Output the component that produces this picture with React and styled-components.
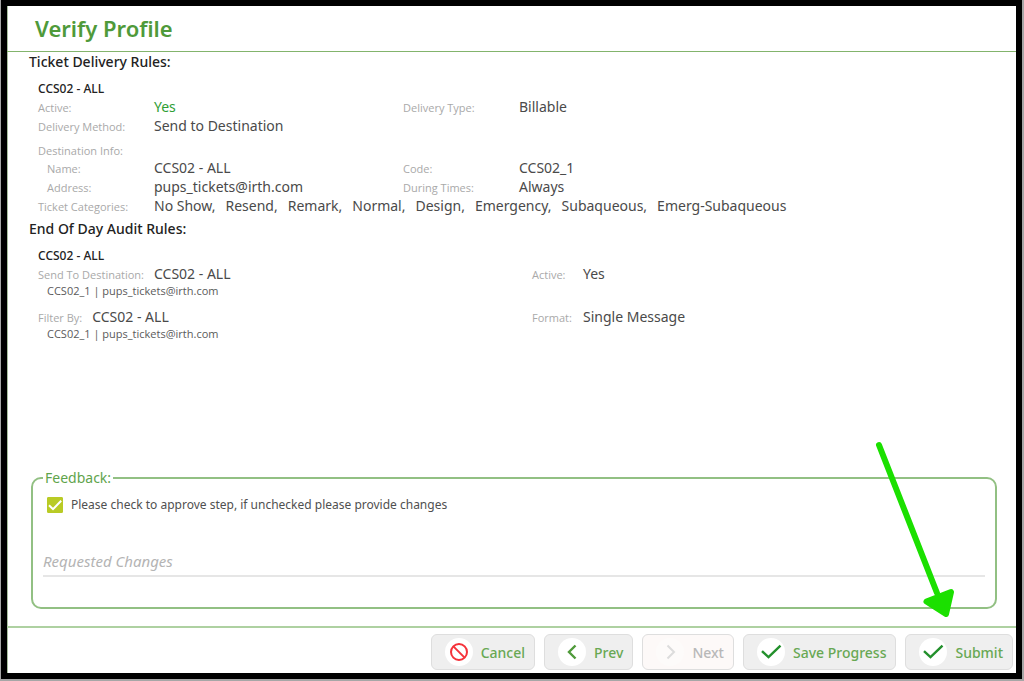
import React, { useState } from "react";
import styled, { createGlobalStyle } from "styled-components";

const GlobalStyle = createGlobalStyle`
  *, *::before, *::after { box-sizing: border-box; }
  body {
    margin: 0;
    background: #a6a6a6;
    color: #4a4a4a;
    font-family: "Noto Sans", "Open Sans", sans-serif;
  }
  h1, h2, h3, p, dl, dd { margin: 0; }
`;

const COMPACT_FONT = `"Open Sans", "Noto Sans", sans-serif`;

const Page = styled.div`
  display: flex;
  min-height: 100vh;
  padding: 0 2px 2px 1px;
`;

const Window = styled.main`
  position: relative;
  flex: 1;
  display: flex;
  flex-direction: column;
  min-width: 0;
  background: #fff;
  border: 6px solid #000;
  box-shadow: inset 1px 0 0 #a9bf9f;
`;

const Header = styled.header`
  padding: 6px 28px 7px;
  border-bottom: 1px solid #83b46c;
`;

const Title = styled.h1`
  font-size: 22px;
  line-height: 32px;
  font-weight: 600;
  color: #4f9a3a;
`;

const Content = styled.div`
  flex: 1;
  display: flex;
  flex-direction: column;
  padding: 0 19px 17px 22px;
`;

const Section = styled.section`
  margin-bottom: 4px;
`;

const SectionTitle = styled.h2`
  font-size: 14px;
  line-height: 20px;
  font-weight: 500;
  color: #222;
`;

const RuleName = styled.h3`
  margin: 9px 0 0 9px;
  font-size: 12px;
  line-height: 16px;
  font-weight: 500;
  color: #222;
`;

const Fields = styled.dl`
  display: grid;
  grid-template-columns: ${(p) => p.$columns};
  padding-left: 9px;
  margin-top: ${(p) => (p.$spaced ? 8 : 0)}px;
`;

const Field = styled.div`
  display: flex;
  align-items: baseline;
  gap: ${(p) => (p.$inline ? 10 : 0)}px;
  height: 19px;
  grid-column: ${(p) => (p.$wide ? "1 / -1" : "auto")};
`;

const Label = styled.dt`
  flex: none;
  width: ${(p) => (p.$width ? `${p.$width}px` : "auto")};
  padding-left: ${(p) => (p.$indent ? 9 : 0)}px;
  font-family: ${COMPACT_FONT};
  font-size: 11px;
  line-height: 19px;
  color: #a9a9a9;
`;

const Value = styled.dd`
  font-size: 14px;
  line-height: 19px;
  color: ${(p) => (p.$positive ? "#2e9e35" : "#4a4a4a")};
`;

const Categories = styled.span`
  display: flex;
  gap: 10px;
`;

const GroupLabel = styled.p`
  padding: 8px 0 0 9px;
  font-family: ${COMPACT_FONT};
  font-size: 11px;
  line-height: 15px;
  color: #a9a9a9;
`;

const Detail = styled.p`
  padding-left: 18px;
  font-family: ${COMPACT_FONT};
  font-size: 11px;
  line-height: 16px;
  color: #5a5a5a;
`;

const Feedback = styled.fieldset`
  margin: auto 0 0 2px;
  min-width: 0;
  padding: 8px 10px 30px;
  border: 2px solid #92c083;
  border-radius: 10px;
`;

const Legend = styled.legend`
  padding: 0 2px;
  font-size: 14px;
  line-height: 19px;
  color: #5fa44c;
`;

const Approve = styled.label`
  display: flex;
  align-items: center;
  gap: 8px;
  padding-left: 4px;
  font-size: 12px;
  line-height: 20px;
  color: #505050;
`;

const CheckSlot = styled.span`
  display: grid;
  width: 16px;
  height: 16px;

  > * { grid-area: 1 / 1; }
  svg { pointer-events: none; }
`;

const Checkbox = styled.input`
  appearance: none;
  width: 16px;
  height: 16px;
  margin: 0;
  border: 1px solid #b9cb25;
  border-radius: 1px;
  background: #fff;

  &:checked { background: #b9cb25; }
`;

const Changes = styled.input`
  display: block;
  width: 100%;
  height: 30px;
  margin-top: 32px;
  padding: 0;
  border: 0;
  border-bottom: 2px solid #e6e6e6;
  background: transparent;
  font: 15px "Noto Sans", "Open Sans", sans-serif;
  color: #4a4a4a;
  outline: none;

  &::placeholder {
    color: #b4b4b4;
    font-style: italic;
    opacity: 1;
  }
`;

const Footer = styled.footer`
  display: flex;
  justify-content: flex-end;
  gap: 9px;
  padding: 6px 3px 3px;
  border-top: 2px solid #aed1a1;
`;

const Button = styled.button`
  display: flex;
  align-items: center;
  gap: 8px;
  height: 36px;
  padding: 0 9px 0 13px;
  border: 1px solid #dedede;
  border-radius: 6px;
  background: #efefef;
  font: 500 14px "Noto Sans", "Open Sans", sans-serif;
  color: #68a854;

  &:disabled {
    background: #fdf9f8;
    color: #b8b8b8;
  }
`;

const IconDisc = styled.span`
  display: grid;
  place-items: center;
  width: 28px;
  height: 28px;
  border-radius: 50%;
  background: ${(p) => (p.$muted ? "#fdfbfa" : "#fff")};
`;

const Pointer = styled.svg`
  position: absolute;
  right: 61px;
  bottom: 56px;
  width: 84px;
  height: 178px;
  pointer-events: none;
`;

const CancelIcon = () => (
  <svg width="20" height="20" viewBox="0 0 20 20" fill="none" stroke="#f5323a" strokeWidth="2">
    <circle cx="10" cy="10" r="8" />
    <path d="M4.400 4.400 15.600 15.600" />
  </svg>
);

const ChevronIcon = ({ direction, color, weight }) => (
  <svg width="20" height="20" viewBox="0 0 20 20" fill="none" stroke={color} strokeWidth={weight}>
    <path d={direction === "left" ? "M13.500 3.500 7 10 13.500 16.500" : "M7.500 3.500 14 10 7.500 16.500"} />
  </svg>
);

const CheckIcon = () => (
  <svg width="22" height="20" viewBox="0 0 22 20" fill="none" stroke="#23902c" strokeWidth="2.4">
    <path d="M2 9.200 8.500 15.200 20.500 3.600" />
  </svg>
);

const CATEGORIES = ["No Show", "Resend", "Remark", "Normal", "Design", "Emergency", "Subaqueous", "Emerg-Subaqueous"];

const DELIVERY_COLUMNS = "365px 1fr";
const AUDIT_COLUMNS = "494px 1fr";

function DeliveryField({ label, indent, positive, wide, children }) {
  return (
    <Field $wide={wide}>
      <Label $width={116} $indent={indent}>{label}</Label>
      <Value $positive={positive}>{children}</Value>
    </Field>
  );
}

function AuditField({ label, labelWidth, children }) {
  return (
    <Field $inline>
      <Label $width={labelWidth}>{label}</Label>
      <Value>{children}</Value>
    </Field>
  );
}

function ActionButton({ icon, disabled, children }) {
  return (
    <Button type="button" disabled={disabled}>
      <IconDisc $muted={disabled}>{icon}</IconDisc>
      {children}
    </Button>
  );
}

export default function App() {
  const [approved, setApproved] = useState(true);

  return (
    <Page>
      <GlobalStyle />
      <Window>
        <Header>
          <Title>Verify Profile</Title>
        </Header>

        <Content>
          <Section>
            <SectionTitle>Ticket Delivery Rules:</SectionTitle>
            <RuleName>CCS02 - ALL</RuleName>
            <Fields $columns={DELIVERY_COLUMNS}>
              <DeliveryField label="Active:" positive>Yes</DeliveryField>
              <DeliveryField label="Delivery Type:">Billable</DeliveryField>
              <DeliveryField label="Delivery Method:" wide>Send to Destination</DeliveryField>
            </Fields>
            <GroupLabel>Destination Info:</GroupLabel>
            <Fields $columns={DELIVERY_COLUMNS}>
              <DeliveryField label="Name:" indent>CCS02 - ALL</DeliveryField>
              <DeliveryField label="Code:">CCS02_1</DeliveryField>
              <DeliveryField label="Address:" indent>pups_tickets@irth.com</DeliveryField>
              <DeliveryField label="During Times:">Always</DeliveryField>
              <DeliveryField label="Ticket Categories:" wide>
                <Categories>
                  {CATEGORIES.map((name, i) => (
                    <span key={name}>{i < CATEGORIES.length - 1 ? `${name},` : name}</span>
                  ))}
                </Categories>
              </DeliveryField>
            </Fields>
          </Section>

          <Section>
            <SectionTitle>End Of Day Audit Rules:</SectionTitle>
            <RuleName>CCS02 - ALL</RuleName>
            <Fields $columns={AUDIT_COLUMNS}>
              <AuditField label="Send To Destination:">CCS02 - ALL</AuditField>
              <AuditField label="Active:" labelWidth={41}>Yes</AuditField>
            </Fields>
            <Detail>CCS02_1 | pups_tickets@irth.com</Detail>
            <Fields $columns={AUDIT_COLUMNS} $spaced>
              <AuditField label="Filter By:">CCS02 - ALL</AuditField>
              <AuditField label="Format:" labelWidth={41}>Single Message</AuditField>
            </Fields>
            <Detail>CCS02_1 | pups_tickets@irth.com</Detail>
          </Section>

          <Feedback>
            <Legend>Feedback:</Legend>
            <Approve>
              <CheckSlot>
                <Checkbox type="checkbox" checked={approved} onChange={(e) => setApproved(e.target.checked)} />
                <svg width="16" height="16" viewBox="0 0 16 16" fill="none" stroke="#fff" strokeWidth="2">
                  <path d="M2 8.200 6 12.200 14.200 3.800" />
                </svg>
              </CheckSlot>
              Please check to approve step, if unchecked please provide changes
            </Approve>
            <Changes type="text" placeholder="Requested Changes" aria-label="Requested Changes" />
          </Feedback>
        </Content>

        <Footer>
          <ActionButton icon={<CancelIcon />}>Cancel</ActionButton>
          <ActionButton icon={<ChevronIcon direction="left" color="#4f9a3a" weight="2.4" />}>Prev</ActionButton>
          <ActionButton icon={<ChevronIcon direction="right" color="#dcdcdc" weight="2" />} disabled>Next</ActionButton>
          <ActionButton icon={<CheckIcon />}>Save Progress</ActionButton>
          <ActionButton icon={<CheckIcon />}>Submit</ActionButton>
        </Footer>

        <Pointer viewBox="0 0 84 178" fill="#1be000" stroke="#1be000" strokeLinecap="round" strokeLinejoin="round" aria-hidden="true">
          <path d="M8 6 66 154" strokeWidth="6" />
          <path d="M55.500 162.500 80 153 75 175Z" strokeWidth="6" />
        </Pointer>
      </Window>
    </Page>
  );
}
